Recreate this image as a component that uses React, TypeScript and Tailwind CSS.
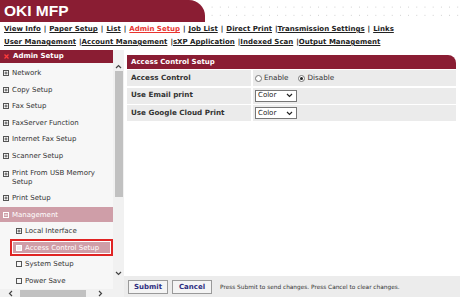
import React from "react";

const RED = "#8a1d33";

function PlusBox() {
  return (
    <svg width="6" height="6" viewBox="0 0 6 6" className="shrink-0">
      <rect x="0.5" y="0.5" width="5" height="5" fill="none" stroke="#555" strokeWidth="1" />
      <path d="M1.5 3H4.5M3 1.5V4.5" stroke="#555" strokeWidth="1" />
    </svg>
  );
}
function MinusBox({ c = "#fff" }: { c?: string }) {
  return (
    <svg width="6" height="6" viewBox="0 0 6 6" className="shrink-0">
      <rect x="0.5" y="0.5" width="5" height="5" fill="none" stroke={c} strokeWidth="1" />
      <path d="M1.5 3H4.5" stroke={c} strokeWidth="1" />
    </svg>
  );
}
function LeafBox({ c = "#555", fill = "none" }: { c?: string; fill?: string }) {
  return (
    <svg width="6" height="6" viewBox="0 0 6 6" className="shrink-0">
      <rect x="0.5" y="0.5" width="5" height="5" fill={fill} stroke={c} strokeWidth="1" />
    </svg>
  );
}

function Item({ label, indent = 3 }: { label: React.ReactNode; indent?: number }) {
  return (
    <div className="h-[16.5px] flex items-center gap-[3px] text-[7px] text-[#333]" style={{ paddingLeft: indent }}>
      <PlusBox />
      <span>{label}</span>
    </div>
  );
}

function Sep() {
  return <span className="text-[#222]">|</span>;
}
function L({ children, red }: { children: React.ReactNode; red?: boolean }) {
  return <span className={red ? "underline text-[#e8332f]" : "underline text-[#222]"}>{children}</span>;
}

function Chevron() {
  return (
    <svg width="7" height="5" viewBox="0 0 7 5">
      <path d="M1 1L3.5 3.5L6 1" fill="none" stroke="#222" strokeWidth="1.2" />
    </svg>
  );
}

function Select() {
  return (
    <div className="w-[42px] h-[12px] border border-[#767676] bg-white flex items-center justify-between pl-[2px] pr-[3px] text-[7px] text-[#222]">
      <span>Color</span>
      <Chevron />
    </div>
  );
}

export default function App() {
  return (
    <div className="w-[460px] h-[297px] overflow-hidden bg-white" style={{ fontFamily: '"DejaVu Sans", Verdana, sans-serif' }}>
      {/* header */}
      <div className="flex h-[22px]">
        <div className="w-[205px] h-full rounded-tr-[16px] flex items-center pl-[4px]" style={{ background: RED }}>
          <span className="text-white font-bold text-[15.5px]" style={{ fontFamily: '"Liberation Sans", Arial, sans-serif' }}>OKI MFP</span>
        </div>
        <div className="flex-1 bg-[radial-gradient(circle,#c8c8c8_0.6px,transparent_0.9px)] bg-[length:8.2px_8.2px] bg-[position:3px_3px]" />
      </div>
      {/* nav */}
      <div className="pl-[4px] pt-[1px] text-[7px] font-bold leading-[13px] whitespace-nowrap">
        <div className="flex gap-[3px]">
          <L>View Info</L><Sep /><L>Paper Setup</L><Sep /><L>List</L><Sep /><L red>Admin Setup</L><Sep /><L>Job List</L><Sep /><L>Direct Print</L><span className="flex"><Sep /><L>Transmission Settings</L></span><Sep /><L>Links</L>
        </div>
        <div className="flex gap-[3px]">
          <L>User Management</L><span className="flex"><Sep /><L>Account Management</L></span><span className="flex"><Sep /><L>sXP Application</L></span><span className="flex"><Sep /><L>Indexed Scan</L></span><span className="flex"><Sep /><L>Output Management</L></span>
        </div>
      </div>
      {/* body */}
      <div className="flex mt-[1px] h-[248px]">
        {/* left */}
        <div className="w-[124px] flex flex-col bg-[#f7f7f7]">
          <div className="flex flex-1 min-h-0">
            <div className="w-[113px] flex flex-col">
              <div className="h-[14px] flex items-center pl-[4px] gap-[4px] text-white font-bold text-[7px]" style={{ background: RED }}>
                <svg width="5" height="5" viewBox="0 0 5 5"><path d="M0.5 0.5L4.5 4.5M4.5 0.5L0.5 4.5" stroke="#ff3b3b" strokeWidth="1.3" /></svg>
                <span>Admin Setup</span>
              </div>
              <div className="pt-[2.5px] flex flex-col">
                <Item label="Network" />
                <Item label="Copy Setup" />
                <Item label="Fax Setup" />
                <Item label="FaxServer Function" />
                <Item label="Internet Fax Setup" />
                <Item label="Scanner Setup" />
                <div className="h-[26px] flex items-start gap-[3px] pl-[3px] pt-[5px] text-[7px] text-[#333] leading-[8.5px]">
                  <div className="pt-[1.5px]"><PlusBox /></div>
                  <span>Print From USB Memory<br />Setup</span>
                </div>
                <Item label="Print Setup" />
                <div className="h-[16.5px] flex items-center">
                  <div className="w-full h-[15px] bg-[#cf9ea8] flex items-center gap-[3px] pl-[3px] text-[7px] text-white">
                    <MinusBox />
                    <span>Management</span>
                  </div>
                </div>
                <Item label="Local Interface" indent={16} />
                <div className="h-[16.5px] flex items-center pl-[10px]">
                  <div className="w-full h-[17px] border-2 border-[#e02424] flex items-center">
                    <div className="w-full h-full bg-[#cf9ea8] border border-white flex items-center gap-[3px] pl-[3px] text-[7px] text-white">
                      <LeafBox c="#fff" fill="#eee" />
                      <span>Access Control Setup</span>
                    </div>
                  </div>
                </div>
                <div className="h-[16.5px] flex items-center gap-[3px] pl-[16px] text-[7px] text-[#333]">
                  <LeafBox />
                  <span>System Setup</span>
                </div>
                <div className="h-[16.5px] flex items-center gap-[3px] pl-[16px] text-[7px] text-[#333]">
                  <LeafBox />
                  <span>Power Save</span>
                </div>
              </div>
            </div>
            {/* vscroll */}
            <div className="w-[11px] bg-[#f1f1f1] flex flex-col items-center">
              <div className="h-[20px] flex items-end pb-[1px] justify-center">
                <svg width="7" height="5" viewBox="0 0 7 5"><path d="M1 4L3.5 1.5L6 4" fill="none" stroke="#444" strokeWidth="1.2" /></svg>
              </div>
              <div className="w-[8px] h-[126px] mt-[1px] bg-[#c1c1c1]" />
              <div className="flex-1" />
              <div className="h-[20px] flex items-start pt-[2px] justify-center">
                <svg width="7" height="5" viewBox="0 0 7 5"><path d="M1 1L3.5 3.5L6 1" fill="none" stroke="#444" strokeWidth="1.2" /></svg>
              </div>
            </div>
          </div>
          {/* hscroll */}
          <div className="h-[9px] bg-[#f1f1f1] flex items-center">
            <div className="w-[20px] flex justify-center">
              <svg width="5" height="7" viewBox="0 0 5 7"><path d="M4 1L1.5 3.5L4 6" fill="none" stroke="#444" strokeWidth="1.2" /></svg>
            </div>
            <div className="w-[66px] h-[7px] bg-[#c1c1c1]" />
            <div className="w-[28px] flex justify-center">
              <svg width="5" height="7" viewBox="0 0 5 7"><path d="M1 1L3.5 3.5L1 6" fill="none" stroke="#444" strokeWidth="1.2" /></svg>
            </div>
          </div>
        </div>
        {/* right */}
        <div className="flex-1 flex flex-col">
          <div className="flex-1 pt-[5px] pl-[3px] pr-[4px]">
            <div className="h-[14px] rounded-tr-[8px] flex items-center pl-[4px] text-white font-bold text-[7px]" style={{ background: RED }}>
              Access Control Setup
            </div>
            <div className="mt-[1px] flex flex-col gap-[1.5px] text-[7.2px]">
              <div className="flex h-[16px] gap-[2px]">
                <div className="w-[124px] bg-[#ebebeb] flex items-center pl-[4px] font-bold text-[#333]">Access Control</div>
                <div className="flex-1 bg-[#ebebeb] flex items-center pl-[2px] text-[#333]">
                  <span className="w-[7px] h-[7px] rounded-full border border-[#777] bg-white mr-[2px]" />
                  <span>Enable</span>
                  <span className="w-[7px] h-[7px] rounded-full border border-[#777] bg-white ml-[10px] mr-[2px] flex items-center justify-center">
                    <span className="w-[3px] h-[3px] rounded-full bg-[#222]" />
                  </span>
                  <span>Disable</span>
                </div>
              </div>
              <div className="flex h-[16px] gap-[2px]">
                <div className="w-[124px] bg-[#ebebeb] flex items-center pl-[4px] font-bold text-[#333]">Use Email print</div>
                <div className="flex-1 bg-[#ebebeb] flex items-center pl-[2px]"><Select /></div>
              </div>
              <div className="flex h-[16px] gap-[2px]">
                <div className="w-[124px] bg-[#ebebeb] flex items-center pl-[4px] font-bold text-[#333]">Use Google Cloud Print</div>
                <div className="flex-1 bg-[#ebebeb] flex items-center pl-[2px]"><Select /></div>
              </div>
            </div>
          </div>
          <div className="h-[22px] bg-[#ececec] flex items-center pl-[4px] gap-[4px]">
            <button className="h-[14px] w-[40px] border border-[#9a9a9a] bg-[#f4f4f4] text-[#2d2d80] text-[7px] font-bold">Submit</button>
            <button className="h-[14px] w-[40px] border border-[#9a9a9a] bg-[#f4f4f4] text-[#2d2d80] text-[7px] font-bold">Cancel</button>
            <span className="ml-[4px] text-[5.8px] text-[#333]">Press Submit to send changes. Press Cancel to clear changes.</span>
          </div>
        </div>
      </div>
    </div>
  );
}
